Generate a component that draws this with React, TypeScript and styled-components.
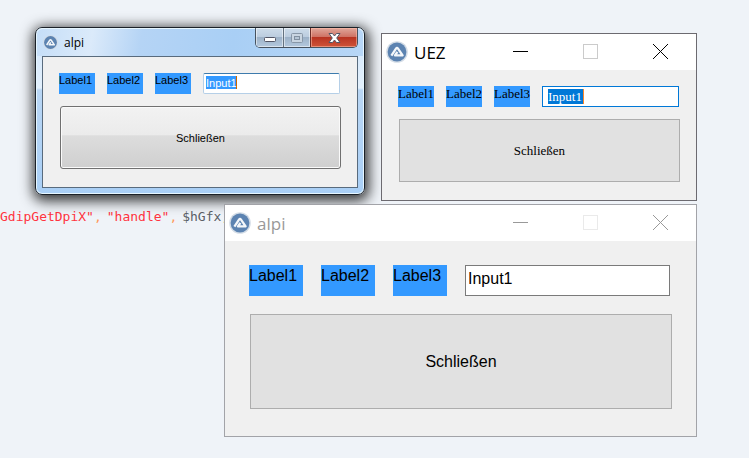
import React from "react";
import styled, { createGlobalStyle, css } from "styled-components";

type Scale = "small" | "large";
type Tone = "active" | "inactive";
type FieldLook = "aero" | "focused" | "plain";
type CaptionKind = "minimize" | "maximize" | "close";

const GlobalStyle = createGlobalStyle`
  *, *::before, *::after { box-sizing: border-box; }
  body { margin: 0; background: #eff3f8; }
  button, input { font: inherit; margin: 0; }
`;

const sans = `"Liberation Sans", Arial, sans-serif`;
const serif = `"Liberation Serif", "Times New Roman", serif`;
const title = `"Open Sans", "Noto Sans", sans-serif`;

const Desktop = styled.main`
  position: relative;
  min-height: 100vh;
  overflow: hidden;
  background: #eff3f8;
`;

const CodeLine = styled.code`
  position: absolute;
  left: 0;
  top: 208px;
  display: flex;
  gap: 5px;
  font: 13px/18px "DejaVu Sans Mono", monospace;
  white-space: pre;
`;

const Token = styled.span<{ $color: string }>`
  color: ${(p) => p.$color};
`;

const Comma = styled.span`
  color: #ff9a5c;
`;

const place = css<{ $x: number; $y: number; $width: number }>`
  position: absolute;
  left: ${(p) => p.$x}px;
  top: ${(p) => p.$y}px;
  width: ${(p) => p.$width}px;
`;

const FlatWindow = styled.section<{ $x: number; $y: number; $width: number; $tone: Tone }>`
  ${place}
  border: 1px solid ${(p) => (p.$tone === "active" ? "#6c6a70" : "#a2a3a8")};
  background: #f0f0f0;
`;

const FlatTitleBar = styled.header<{ $tone: Tone }>`
  display: flex;
  align-items: center;
  height: 36px;
  padding: 0 1px 1px 4px;
  background: #fff;
  color: ${(p) => (p.$tone === "active" ? "#000" : "#999")};
`;

const FlatTitle = styled.h2`
  flex: 1;
  margin: 2px 0 0 6px;
  font: 400 17px/24px ${title};
`;

const FlatCaptionButton = styled.button<{ $dim?: boolean }>`
  display: grid;
  place-items: center;
  width: 70px;
  height: 35px;
  padding: 0;
  border: 0;
  background: transparent;
  color: inherit;
  opacity: ${(p) => (p.$dim ? 0.2 : 1)};
`;

const AeroWindow = styled.section<{ $x: number; $y: number; $width: number }>`
  ${place}
  padding: 0 6px 6px;
  border: 1px solid #1b2128;
  border-radius: 7px;
  background: linear-gradient(#cfe4fa 0, #e3f0fc 60px, #b9d6f4 62px, #a9cff6 100%);
  box-shadow: inset 0 0 0 1px #e6f6ff, 1px 3px 13px 3px rgba(0, 0, 0, 0.78);
`;

const AeroTitleBar = styled.header`
  display: flex;
  align-items: flex-start;
  height: 28px;
  margin: 0 -5px;
  padding: 0 5px 0 2px;
  border-top: 1px solid #e6f6ff;
  border-radius: 6px 6px 0 0;
  background: linear-gradient(100deg, #c5def8 0%, #dbeafa 17%, #b5d4f5 32%, #a9cff5 60%, #b7d6f6 100%);
`;

const AeroTitle = styled.h2`
  flex: 1;
  margin: 6px 0 0 6px;
  font: 400 12px/16px ${title};
  color: #000;
`;

const AeroIcon = styled.span`
  display: flex;
  margin: 6px 0 0 4px;
`;

const AeroControls = styled.div`
  display: flex;
  height: 20px;
  margin-top: -1px;
  border: 1px solid #46525f;
  border-top: 0;
  border-radius: 0 0 5px 5px;
  overflow: hidden;
`;

const captionWidths: Record<CaptionKind, number> = { minimize: 27, maximize: 27, close: 47 };

const AeroButton = styled.button<{ $kind: CaptionKind }>`
  display: grid;
  place-items: center;
  flex: none;
  width: ${(p) => captionWidths[p.$kind]}px;
  padding: 0;
  border: 0;
  border-left: ${(p) =>
    p.$kind === "minimize" ? "0" : p.$kind === "maximize" ? "1px solid #64727f" : "1px solid #6b2d28"};
  ${(p) =>
    p.$kind === "close"
      ? css`
          background: linear-gradient(#e0a79b 0, #cf7466 45%, #b83422 50%, #cf5439 100%);
          box-shadow: inset 0 0 0 1px rgba(255, 190, 170, 0.55);
        `
      : css`
          background: linear-gradient(#cddcea 0, #bccddf 45%, #9db2c8 50%, #b4c9de 100%);
          box-shadow: inset 0 0 0 1px rgba(255, 255, 255, 0.5);
        `}
`;

const AeroClient = styled.div`
  border: 1px solid #596b7d;
  background: #f0f0f0;
`;

const Form = styled.form<{ $scale: Scale; $font: string; $size: number }>`
  display: flex;
  flex-direction: column;
  gap: ${(p) => (p.$scale === "small" ? 12 : 18)}px;
  padding: ${(p) => (p.$scale === "small" ? "16px 16px 18px" : "24px 24px 27px")};
  font-family: ${(p) => p.$font};
  font-size: ${(p) => p.$size}px;
  color: #000;
`;

const Fields = styled.div<{ $scale: Scale }>`
  display: flex;
  gap: ${(p) => (p.$scale === "small" ? 12 : 18)}px;
  padding-right: ${(p) => (p.$scale === "small" ? 1 : 2)}px;
`;

const FieldLabel = styled.label<{ $scale: Scale }>`
  flex: none;
  width: ${(p) => (p.$scale === "small" ? 36 : 54)}px;
  height: ${(p) => (p.$scale === "small" ? 21 : 31)}px;
  line-height: ${(p) => (p.$scale === "small" ? 15 : 22)}px;
  background: #3399ff;
  white-space: nowrap;
`;

const looks = {
  aero: css`
    padding: 0 2px 1px;
    border: 1px solid #b5cfe7;
    border-top-color: #3d7bad;
    border-radius: 2px;
    color: #fff;
    background: linear-gradient(#3399ff, #3399ff) 2px 2px / 30px 13px no-repeat,
      linear-gradient(#cc6600, #cc6600) 32px 2px / 1px 13px no-repeat, #fff;
  `,
  focused: css`
    padding: 0 5px;
    border: 1px solid #0078d7;
    color: #fff;
    background: linear-gradient(#0078d7, #0078d7) 5px 2px / 35px 15px no-repeat,
      linear-gradient(#ff8728, #ff8728) 40px 2px / 1px 15px no-repeat, #fff;
  `,
  plain: css`
    padding: 0 2px 4px;
    border: 1px solid #7a7a7a;
    color: #000;
    background: #fff;
  `,
};

const TextField = styled.input<{ $look: FieldLook }>`
  flex: 1;
  min-width: 0;
  border-radius: 0;
  outline: 0;
  ${(p) => looks[p.$look]}
`;

const ButtonRow = styled.div`
  display: flex;
  padding-left: 1px;
`;

const CloseButton = styled.button<{ $scale: Scale; $aero: boolean }>`
  flex: 1;
  height: ${(p) => (p.$scale === "small" ? 63 : 95)}px;
  color: #000;
  ${(p) =>
    p.$aero
      ? css`
          border: 1px solid #707070;
          border-radius: 3px;
          background: linear-gradient(#f2f2f2 0, #ebebeb 46%, #dddddd 47%, #cfcfcf 100%);
          box-shadow: inset 0 0 0 1px #fafafa;
        `
      : css`
          border: 1px solid #adadad;
          background: #e1e1e1;
        `}
`;

const Logo = ({ size }: { size: number }) => (
  <svg width={size} height={size} viewBox="0 0 22 22" aria-hidden="true">
    <circle cx="11" cy="11" r="10.8" fill="#d3dce6" />
    <circle cx="11" cy="11" r="9.4" fill="#5c83b1" />
    <path
      d="M5.4 14.6L10 7.6Q11 6.2 12 7.6L16.6 14.4H9L11.4 10.8"
      fill="none"
      stroke="#f4f7fa"
      strokeWidth="2.3"
      strokeLinejoin="round"
    />
  </svg>
);

const FlatControls = () => (
  <>
    <FlatCaptionButton type="button" aria-label="Minimieren">
      <svg width="15" height="15" viewBox="0 0 15 15">
        <path d="M0 7.5H15" stroke="currentColor" />
      </svg>
    </FlatCaptionButton>
    <FlatCaptionButton type="button" aria-label="Maximieren" $dim disabled>
      <svg width="15" height="15" viewBox="0 0 15 15">
        <rect x=".5" y=".5" width="14" height="14" fill="none" stroke="currentColor" />
      </svg>
    </FlatCaptionButton>
    <FlatCaptionButton type="button" aria-label="Fenster schließen">
      <svg width="15" height="15" viewBox="0 0 15 15">
        <path d="M0 0L15 15M15 0L0 15" stroke="currentColor" />
      </svg>
    </FlatCaptionButton>
  </>
);

interface DialogFormProps {
  id: string;
  scale: Scale;
  font: string;
  size: number;
  look: FieldLook;
}

const DialogForm = ({ id, scale, font, size, look }: DialogFormProps) => (
  <Form $scale={scale} $font={font} $size={size} onSubmit={(e) => e.preventDefault()}>
    <Fields $scale={scale}>
      {["Label1", "Label2", "Label3"].map((text) => (
        <FieldLabel key={text} $scale={scale} htmlFor={id}>
          {text}
        </FieldLabel>
      ))}
      <TextField id={id} $look={look} defaultValue="Input1" spellCheck={false} />
    </Fields>
    <ButtonRow>
      <CloseButton type="button" $scale={scale} $aero={look === "aero"}>
        Schließen
      </CloseButton>
    </ButtonRow>
  </Form>
);

export default function App() {
  return (
    <Desktop>
      <GlobalStyle />
      <CodeLine>
        <Token $color="#ff3340">GdipGetDpiX"<Comma>,</Comma></Token>
        <Token $color="#ff3340">"handle"<Comma>,</Comma></Token>
        <Token $color="#5a5f66">$hGfx<Comma>,</Comma></Token>
      </CodeLine>

      <AeroWindow $x={35} $y={27} $width={330}>
        <AeroTitleBar>
          <AeroIcon>
            <Logo size={15} />
          </AeroIcon>
          <AeroTitle>alpi</AeroTitle>
          <AeroControls>
            <AeroButton type="button" $kind="minimize" aria-label="Minimieren">
              <svg width="12" height="18" viewBox="0 0 12 18">
                <rect x=".5" y="8.5" width="11" height="4" rx="1" fill="#fff" stroke="#535666" />
              </svg>
            </AeroButton>
            <AeroButton type="button" $kind="maximize" aria-label="Maximieren" disabled>
              <svg width="12" height="10" viewBox="0 0 12 10">
                <rect x=".5" y=".5" width="11" height="9" rx="1" fill="#c9d5e1" stroke="#8897a7" />
                <rect x="3.5" y="3.5" width="5" height="3" fill="#b5c5d5" stroke="#8190a0" />
              </svg>
            </AeroButton>
            <AeroButton type="button" $kind="close" aria-label="Fenster schließen">
              <svg width="13" height="12" viewBox="0 0 13 12">
                <path
                  d="M1 1.5H4.5L6.5 4L8.5 1.5H12L8.7 6L12 10.5H8.5L6.5 8L4.5 10.5H1L4.3 6Z"
                  fill="#fff"
                  stroke="#535666"
                />
              </svg>
            </AeroButton>
          </AeroControls>
        </AeroTitleBar>
        <AeroClient>
          <DialogForm id="aero-input" scale="small" font={sans} size={11} look="aero" />
        </AeroClient>
      </AeroWindow>

      <FlatWindow $x={381} $y={33} $width={316} $tone="active">
        <FlatTitleBar $tone="active">
          <Logo size={22} />
          <FlatTitle>UEZ</FlatTitle>
          <FlatControls />
        </FlatTitleBar>
        <DialogForm id="uez-input" scale="small" font={serif} size={13} look="focused" />
      </FlatWindow>

      <FlatWindow $x={224} $y={204} $width={473} $tone="inactive">
        <FlatTitleBar $tone="inactive">
          <Logo size={22} />
          <FlatTitle>alpi</FlatTitle>
          <FlatControls />
        </FlatTitleBar>
        <DialogForm id="alpi-input" scale="large" font={sans} size={16} look="plain" />
      </FlatWindow>
    </Desktop>
  );
}
